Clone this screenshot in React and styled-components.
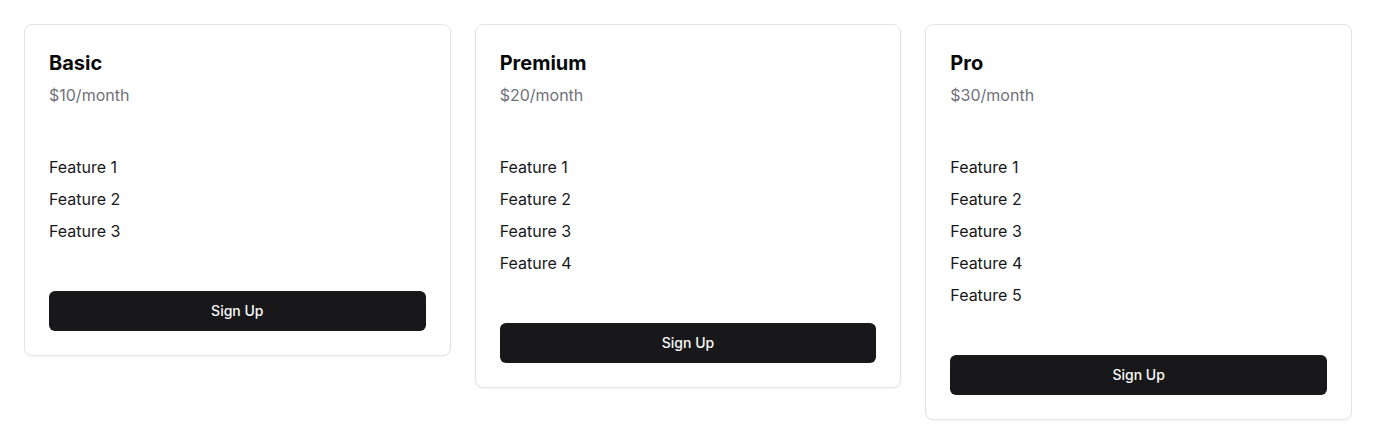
import React from "react";
import styled, { createGlobalStyle } from "styled-components";

const GlobalStyle = createGlobalStyle`
  * { box-sizing: border-box; }
  body {
    margin: 0;
    background: #ffffff;
    font-family: Inter, "Noto Sans", sans-serif;
    color: #09090b;
  }
`;

const Grid = styled.div`
  display: grid;
  grid-template-columns: repeat(3, 1fr);
  gap: 24px;
  padding: 24px;
  align-items: start;
`;

const Card = styled.div`
  display: flex;
  flex-direction: column;
  border: 1px solid #e4e4e7;
  border-radius: 8px;
  background: #fff;
  box-shadow: 0 1px 2px rgba(0, 0, 0, 0.05);
  padding: 24px 24px 24px;
`;

const Title = styled.h3`
  margin: 0;
  font-size: 20px;
  line-height: 28px;
  font-weight: 650;
  color: #09090b;
`;

const Price = styled.p`
  margin: 6px 0 0;
  font-size: 16px;
  line-height: 24px;
  color: #71717a;
`;

const Features = styled.ul`
  list-style: none;
  margin: 48px 0 0;
  padding: 0;
  display: flex;
  flex-direction: column;
  gap: 8px;
`;

const Feature = styled.li`
  font-size: 16px;
  line-height: 24px;
  color: #18181b;
`;

const Button = styled.button`
  margin-top: 48px;
  height: 40px;
  width: 100%;
  border: none;
  border-radius: 6px;
  background: #18181b;
  color: #fafafa;
  font-family: inherit;
  font-size: 14px;
  line-height: 20px;
  font-weight: 500;
  padding: 0 0 1px;
  cursor: pointer;
`;

const plans = [
  { name: "Basic", price: "$10/month", features: 3 },
  { name: "Premium", price: "$20/month", features: 4 },
  { name: "Pro", price: "$30/month", features: 5 },
];

export default function App() {
  return (
    <>
      <GlobalStyle />
      <Grid>
        {plans.map((plan) => (
          <Card key={plan.name}>
            <Title>{plan.name}</Title>
            <Price>{plan.price}</Price>
            <Features>
              {Array.from({ length: plan.features }, (_, i) => (
                <Feature key={i}>Feature {i + 1}</Feature>
              ))}
            </Features>
            <Button>Sign Up</Button>
          </Card>
        ))}
      </Grid>
    </>
  );
}
